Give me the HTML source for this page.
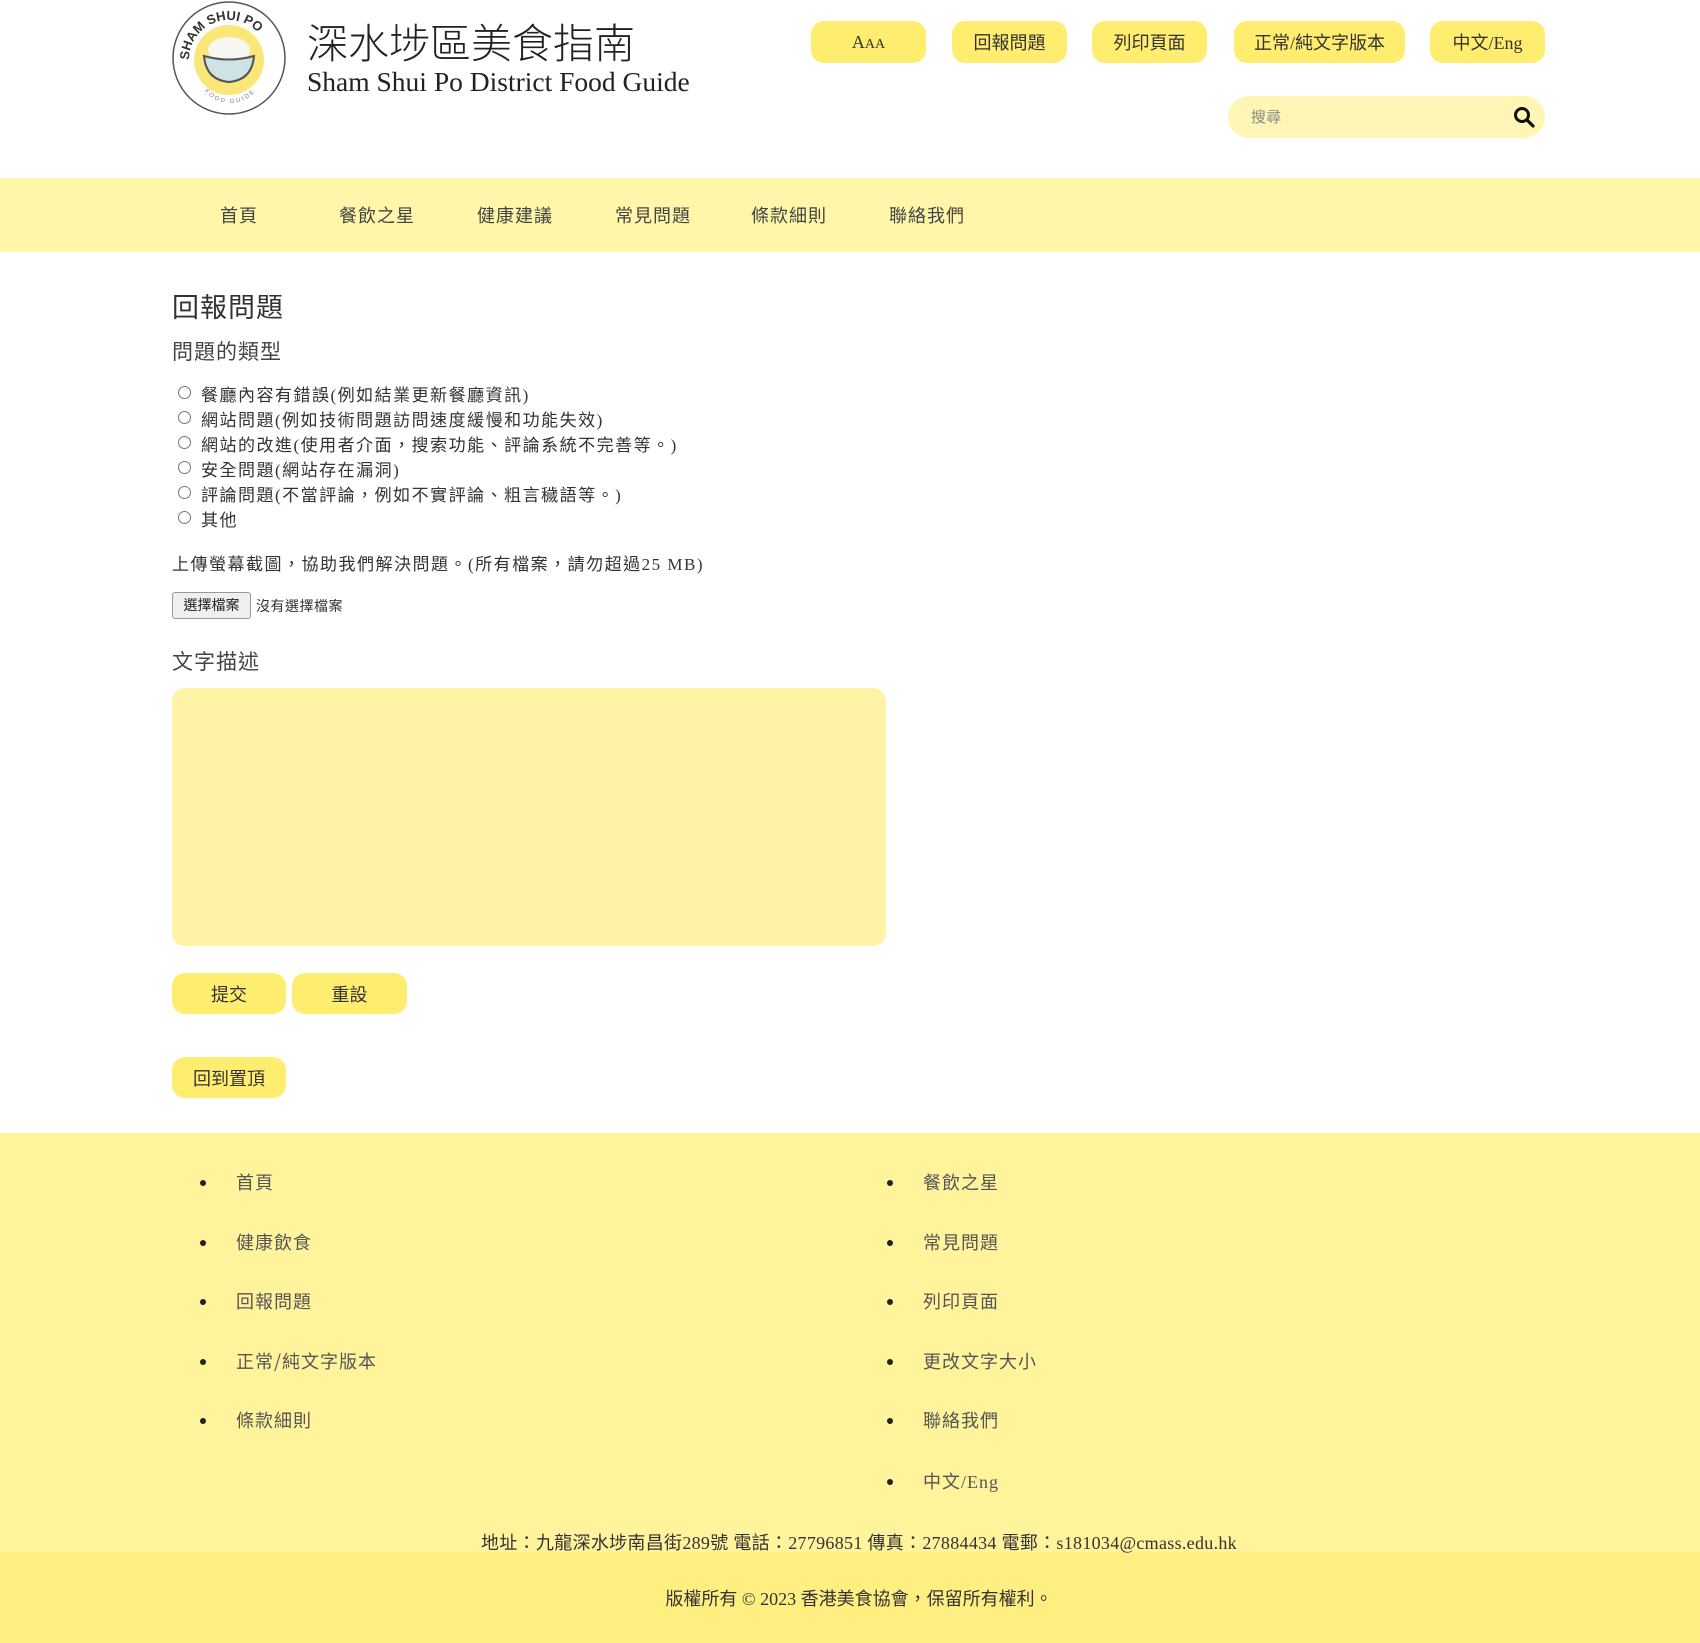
<!DOCTYPE html>
<html><head><meta charset="utf-8">
<style>
*{margin:0;padding:0;box-sizing:border-box}
body{width:1700px;height:1643px;position:relative;background:#fff;font-family:"Liberation Serif","Noto Sans CJK TC",serif;color:#333;overflow:hidden}
.a{position:absolute;white-space:nowrap}
.btn{position:absolute;background:#ffed70;border-radius:13px;display:flex;align-items:center;justify-content:center;font-size:18px;color:#333}
.cn{font-family:"Liberation Serif","Noto Sans CJK TC",sans-serif}
.nav{position:absolute;top:178px;left:0;width:1700px;height:74px;background:#fff6aa}
.nav span{position:absolute;top:24px;font-size:18px;font-family:"Noto Sans CJK TC",sans-serif;color:#444;letter-spacing:1px}
.r{position:absolute;left:178px;width:13px;height:13px;border:1px solid #777;border-radius:50%}
.rt{position:absolute;left:201px;font-size:17px;font-family:"Liberation Serif","Noto Sans CJK TC",serif;color:#333;letter-spacing:1.5px}
.fl{position:absolute;font-size:18px;font-family:"Noto Sans CJK TC",sans-serif;color:#555;letter-spacing:1px}
.bu{position:absolute;width:6px;height:6px;border-radius:50%;background:#222}
</style></head><body>
<svg class="a" style="left:171px;top:0" width="117" height="116" viewBox="0 0 117 116">
<defs><path id="arc" d="M18 60 A40 40 0 0 1 98 60"/><path id="arc2" d="M26 70 A33 33 0 0 0 92 70"/></defs>
<circle cx="58" cy="58" r="56" fill="#fff" stroke="#555" stroke-width="1.5"/>
<circle cx="58" cy="60" r="35" fill="#fbe67a"/>
<ellipse cx="58" cy="50" rx="21" ry="13" fill="#f7f7f2"/>
<path d="M33 56 Q58 63 83 56 Q81 80 58 82 Q35 80 33 56Z" fill="#cfe2e4" stroke="#555" stroke-width="2"/>
<text font-size="13" font-weight="bold" font-family="Liberation Sans" fill="#333"><textPath href="#arc">SHAM SHUI PO</textPath></text>
<text font-size="6" font-family="Liberation Sans" fill="#777" letter-spacing="2"><textPath href="#arc2" startOffset="22%">FOOD GUIDE</textPath></text>
</svg>
<div class="a" style="left:307px;top:15px;font-size:41px;font-family:'Noto Sans CJK TC',sans-serif;color:#222;line-height:50px;font-weight:300">深水埗區美食指南</div>
<div class="a" style="left:307px;top:66px;font-size:27.5px;color:#222">Sham Shui Po District Food Guide</div>
<div class="btn" style="left:811px;top:21px;width:115px;height:42px"><span>A<span style="font-size:14px">AA</span></span></div>
<div class="btn cn" style="left:952px;top:21px;width:115px;height:42px">回報問題</div>
<div class="btn cn" style="left:1092px;top:21px;width:115px;height:42px">列印頁面</div>
<div class="btn cn" style="left:1234px;top:21px;width:171px;height:42px">正常/純文字版本</div>
<div class="btn cn" style="left:1430px;top:21px;width:115px;height:42px">中文/Eng</div>
<div class="a" style="left:1228px;top:96px;width:317px;height:42px;background:#fff6b5;border-radius:21px"></div>
<div class="a" style="left:1251px;top:106px;font-size:15px;color:#888;font-family:'Noto Sans CJK TC',sans-serif">搜尋</div>
<svg class="a" style="left:1513px;top:106px" width="22" height="22" viewBox="0 0 22 22"><circle cx="9" cy="9" r="6.5" fill="none" stroke="#111" stroke-width="3"/><path d="M14 14 L20 20" stroke="#111" stroke-width="3.2" stroke-linecap="round"/></svg>
<div class="nav">
<span style="left:220px">首頁</span><span style="left:339px">餐飲之星</span><span style="left:477px">健康建議</span><span style="left:615px">常見問題</span><span style="left:751px">條款細則</span><span style="left:889px">聯絡我們</span>
</div>
<div class="a" style="left:172px;top:286px;font-size:27px;font-family:'Noto Sans CJK TC',sans-serif;color:#333;letter-spacing:1px">回報問題</div>
<div class="a" style="left:172px;top:336px;font-size:21px;font-family:'Noto Sans CJK TC',sans-serif;color:#444;letter-spacing:1px">問題的類型</div>
<div class="r" style="top:386px"></div><div class="rt" style="top:381px">餐廳內容有錯誤(例如結業更新餐廳資訊)</div>
<div class="r" style="top:411px"></div><div class="rt" style="top:406px">網站問題(例如技術問題訪問速度緩慢和功能失效)</div>
<div class="r" style="top:436px"></div><div class="rt" style="top:431px">網站的改進(使用者介面，搜索功能、評論系統不完善等。)</div>
<div class="r" style="top:461px"></div><div class="rt" style="top:456px">安全問題(網站存在漏洞)</div>
<div class="r" style="top:486px"></div><div class="rt" style="top:481px">評論問題(不當評論，例如不實評論、粗言穢語等。)</div>
<div class="r" style="top:511px"></div><div class="rt" style="top:506px">其他</div>
<div class="rt" style="left:172px;top:550px">上傳螢幕截圖，協助我們解決問題。(所有檔案，請勿超過25 MB)</div>
<div class="a" style="left:172px;top:592px;width:79px;height:27px;background:#efefef;border:1px solid #999;border-radius:3px;font-size:14px;font-family:'Noto Sans CJK TC',sans-serif;text-align:center;line-height:25px;color:#222">選擇檔案</div>
<div class="a" style="left:256px;top:596px;font-size:14px;font-family:'Noto Sans CJK TC',sans-serif;color:#333;letter-spacing:0.5px">沒有選擇檔案</div>
<div class="a" style="left:172px;top:646px;font-size:21px;font-family:'Noto Sans CJK TC',sans-serif;color:#444;letter-spacing:1px">文字描述</div>
<div class="a" style="left:172px;top:688px;width:714px;height:258px;background:#fff4a6;border-radius:13px"></div>
<div class="btn cn" style="left:172px;top:973px;width:114px;height:41px;font-size:18px">提交</div>
<div class="btn cn" style="left:292px;top:973px;width:115px;height:41px;font-size:18px">重設</div>
<div class="btn cn" style="left:172px;top:1057px;width:114px;height:41px;font-size:18px">回到置頂</div>
<div class="a" style="left:0;top:1133px;width:1700px;height:419px;background:#fff49c"></div>
<div class="a" style="left:0;top:1552px;width:1700px;height:91px;background:#ffee80"></div>
<div class="bu" style="left:200px;top:1180px"></div><div class="fl" style="left:236px;top:1169px">首頁</div>
<div class="bu" style="left:200px;top:1240px"></div><div class="fl" style="left:236px;top:1229px">健康飲食</div>
<div class="bu" style="left:200px;top:1299px"></div><div class="fl" style="left:236px;top:1288px">回報問題</div>
<div class="bu" style="left:200px;top:1359px"></div><div class="fl" style="left:236px;top:1348px">正常/純文字版本</div>
<div class="bu" style="left:200px;top:1418px"></div><div class="fl" style="left:236px;top:1407px">條款細則</div>
<div class="bu" style="left:887px;top:1180px"></div><div class="fl" style="left:923px;top:1169px">餐飲之星</div>
<div class="bu" style="left:887px;top:1240px"></div><div class="fl" style="left:923px;top:1229px">常見問題</div>
<div class="bu" style="left:887px;top:1299px"></div><div class="fl" style="left:923px;top:1288px">列印頁面</div>
<div class="bu" style="left:887px;top:1359px"></div><div class="fl" style="left:923px;top:1348px">更改文字大小</div>
<div class="bu" style="left:887px;top:1418px"></div><div class="fl" style="left:923px;top:1407px">聯絡我們</div>
<div class="bu" style="left:887px;top:1479px"></div><div class="fl cn" style="left:923px;top:1468px;font-family:'Liberation Serif','Noto Sans CJK TC',serif">中文/Eng</div>
<div class="a" style="left:0;width:1718px;top:1529px;text-align:center;font-size:18px;color:#333;letter-spacing:0.3px">地址：九龍深水埗南昌街289號 電話：27796851 傳真：27884434 電郵：s181034@cmass.edu.hk</div>
<div class="a" style="left:0;width:1718px;top:1585px;text-align:center;font-size:18px;color:#333">版權所有 © 2023 香港美食協會，保留所有權利。</div>
</body></html>
